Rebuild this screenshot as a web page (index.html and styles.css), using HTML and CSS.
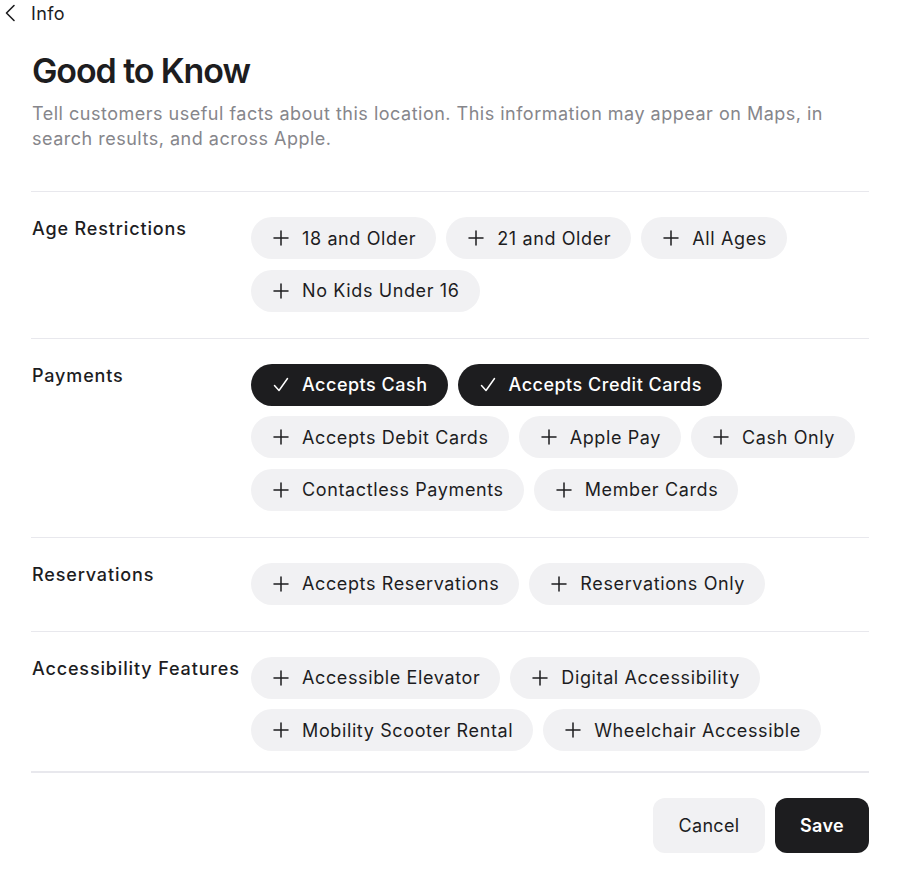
FILE: index.html
```html
<!DOCTYPE html>
<html lang="en">
<head>
<meta charset="utf-8">
<title>Good to Know</title>
<link rel="stylesheet" href="styles.css">
</head>
<body>
<div class="page">
  <a class="back" href="#">
    <svg class="back-icon" width="12" height="18" viewBox="0 0 12 18"><path d="M10 1.5 L2.5 9 L10 16.5" fill="none" stroke="#1d1d1f" stroke-width="1.6" stroke-linecap="round" stroke-linejoin="round"/></svg>
    <span>Info</span>
  </a>
  <main class="content">
    <h1 class="title">Good to Know</h1>
    <p class="desc">Tell customers useful facts about this location. This information may appear on Maps, in search results, and across Apple.</p>

    <section class="group">
      <div class="label">Age Restrictions</div>
      <div class="chips">
        <button class="chip"><svg class="ico" viewBox="0 0 16 16"><path d="M8 1v14M1 8h14"/></svg>18 and Older</button>
        <button class="chip"><svg class="ico" viewBox="0 0 16 16"><path d="M8 1v14M1 8h14"/></svg>21 and Older</button>
        <button class="chip"><svg class="ico" viewBox="0 0 16 16"><path d="M8 1v14M1 8h14"/></svg>All Ages</button>
        <button class="chip"><svg class="ico" viewBox="0 0 16 16"><path d="M8 1v14M1 8h14"/></svg>No Kids Under 16</button>
      </div>
    </section>

    <section class="group">
      <div class="label">Payments</div>
      <div class="chips">
        <button class="chip on"><svg class="ico" viewBox="0 0 16 16"><path d="M1.5 8.5 L6 13.5 L14.5 1.5"/></svg>Accepts Cash</button>
        <button class="chip on"><svg class="ico" viewBox="0 0 16 16"><path d="M1.5 8.5 L6 13.5 L14.5 1.5"/></svg>Accepts Credit Cards</button>
        <button class="chip"><svg class="ico" viewBox="0 0 16 16"><path d="M8 1v14M1 8h14"/></svg>Accepts Debit Cards</button>
        <button class="chip"><svg class="ico" viewBox="0 0 16 16"><path d="M8 1v14M1 8h14"/></svg>Apple Pay</button>
        <button class="chip"><svg class="ico" viewBox="0 0 16 16"><path d="M8 1v14M1 8h14"/></svg>Cash Only</button>
        <button class="chip"><svg class="ico" viewBox="0 0 16 16"><path d="M8 1v14M1 8h14"/></svg>Contactless Payments</button>
        <button class="chip"><svg class="ico" viewBox="0 0 16 16"><path d="M8 1v14M1 8h14"/></svg>Member Cards</button>
      </div>
    </section>

    <section class="group">
      <div class="label">Reservations</div>
      <div class="chips">
        <button class="chip"><svg class="ico" viewBox="0 0 16 16"><path d="M8 1v14M1 8h14"/></svg>Accepts Reservations</button>
        <button class="chip"><svg class="ico" viewBox="0 0 16 16"><path d="M8 1v14M1 8h14"/></svg>Reservations Only</button>
      </div>
    </section>

    <section class="group last">
      <div class="label">Accessibility Features</div>
      <div class="chips">
        <button class="chip"><svg class="ico" viewBox="0 0 16 16"><path d="M8 1v14M1 8h14"/></svg>Accessible Elevator</button>
        <button class="chip"><svg class="ico" viewBox="0 0 16 16"><path d="M8 1v14M1 8h14"/></svg>Digital Accessibility</button>
        <button class="chip"><svg class="ico" viewBox="0 0 16 16"><path d="M8 1v14M1 8h14"/></svg>Mobility Scooter Rental</button>
        <button class="chip"><svg class="ico" viewBox="0 0 16 16"><path d="M8 1v14M1 8h14"/></svg>Wheelchair Accessible</button>
      </div>
    </section>

    <div class="actions">
      <button class="btn cancel">Cancel</button>
      <button class="btn save">Save</button>
    </div>
  </main>
</div>
</body>
</html>
```
FILE: styles.css
```css
* { box-sizing: border-box; }
body {
  margin: 0;
  background: #fff;
  font-family: Inter, "Noto Sans", sans-serif;
  color: #1d1d1f;
}
.page { width: 918px; }
.back {
  display: flex;
  align-items: center;
  height: 26px;
  padding-left: 4px;
  gap: 15px;
  color: #1d1d1f;
  text-decoration: none;
  font-size: 18px;
  letter-spacing: 0.4px;
}
.back-icon { display: block; }
.content {
  margin-left: 31px;
  width: 838px;
}
.title {
  margin: 25px 0 0 1px;
  font-size: 34px;
  line-height: 40px;
  font-weight: 600;
  letter-spacing: -1.1px;
}
.desc {
  margin: 10px 0 0 1px;
  font-size: 18px;
  line-height: 25px;
  color: #86868b;
  letter-spacing: 0.5px;
  max-width: 810px;
}
.group {
  display: grid;
  grid-template-columns: 220px 1fr;
  border-top: 1px solid #e8e8ed;
  padding: 25px 0 26px;
}
.desc + .group { margin-top: 40px; }
.label {
  font-size: 18px;
  font-weight: 500;
  line-height: 24px;
  letter-spacing: 0.85px;
  padding-left: 1px;
}
.chips {
  display: flex;
  flex-wrap: wrap;
  gap: 10.5px 10px;
}
.chip {
  display: flex;
  align-items: center;
  gap: 13px;
  height: 42px;
  padding: 0 20px 0 22px;
  border: none;
  border-radius: 21px;
  background: #f1f1f3;
  color: #1d1d1f;
  font-family: inherit;
  font-size: 18px;
  font-weight: 400;
  letter-spacing: 0.62px;
}
.ico {
  width: 16px;
  height: 16px;
  fill: none;
  stroke: currentColor;
  stroke-width: 1.5;
  stroke-linecap: round;
  stroke-linejoin: round;
}
.chip.on {
  background: #1d1d1f;
  color: #fff;
  font-weight: 500;
  letter-spacing: 0.5px;
}
.group.last { padding-bottom: 20px; }
.actions {
  display: flex;
  justify-content: flex-end;
  gap: 10px;
  border-top: 2px solid #e8e8ed;
  padding-top: 25px;
}
.btn {
  height: 55px;
  border: none;
  border-radius: 12px;
  font-family: inherit;
  font-size: 18px;
  letter-spacing: 0.3px;
}
.cancel {
  width: 112px;
  background: #f1f1f3;
  color: #1d1d1f;
}
.save {
  width: 94px;
  background: #1d1d1f;
  color: #fff;
  font-weight: 600;
}
```
